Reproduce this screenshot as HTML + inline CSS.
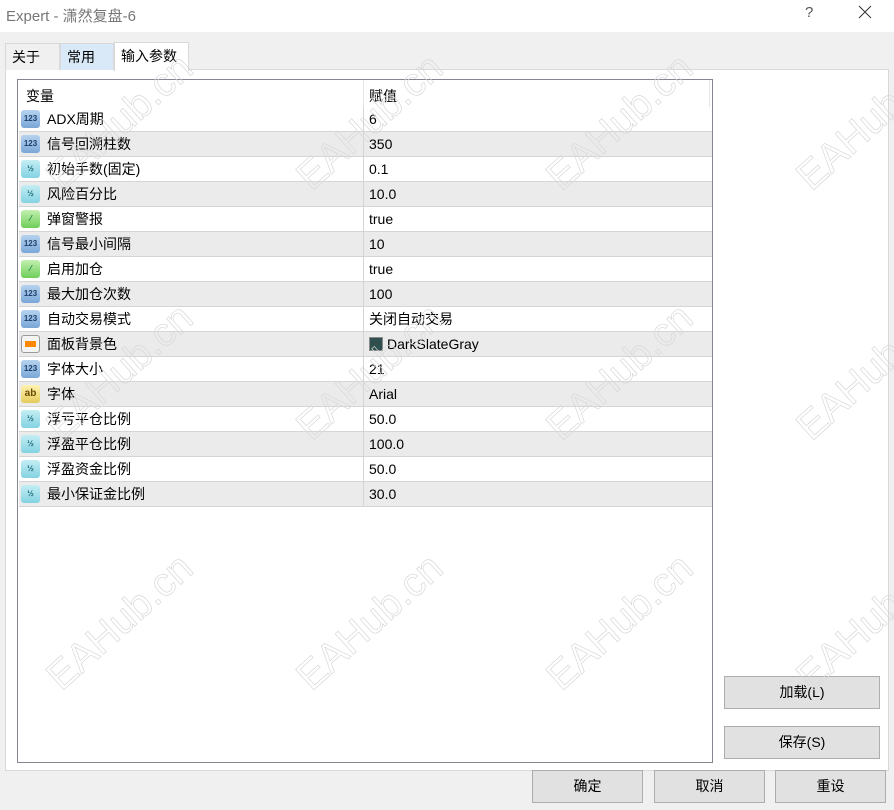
<!DOCTYPE html>
<html><head><meta charset="utf-8"><style>
*{margin:0;padding:0;box-sizing:border-box}
body{width:894px;height:810px;background:#f0f0f0;font-family:"Liberation Sans","Noto Sans CJK SC",sans-serif;font-size:14px;color:#000;position:relative;overflow:hidden}
.title{position:absolute;left:0;top:0;width:894px;height:32px;background:#fff}
.title span{position:absolute;left:6px;top:5px;font-size:15px;color:#777}
.q{position:absolute;left:805px;top:4px;font-size:15px;color:#555}
.x{position:absolute;left:858px;top:5px}
.tab{position:absolute;top:43px;height:27px;border:1px solid #d9d9d9;border-bottom:none;padding:0 6px;line-height:26px;font-size:14px}
.panel{position:absolute;left:5px;top:69px;width:884px;height:702px;background:#fff;border:1px solid #d9d9d9}
.grid{position:absolute;left:17px;top:79px;width:696px;height:684px;border:1px solid #828790;background:#fff}
.row{position:absolute;left:1px;width:693px;height:25px;border-bottom:1px solid #d5d5d5;line-height:24px}
.row.g{background:#ebebeb}
.row .n{position:absolute;left:28px;top:0}
.row .v{position:absolute;left:350px;top:0}
.row .d{position:absolute;left:344px;top:0;width:1px;height:25px;background:#d5d5d5}
.ic{position:absolute;left:2px;top:3px;width:19px;height:18px;border-radius:3px;font-size:8px;font-weight:bold;text-align:center;line-height:18px;color:#1d3f6a}
.i1{background:linear-gradient(#b6d2ee,#7aa7d8)}
.i2{background:linear-gradient(#c4eef4,#84d2e2);color:#1a6a7a}
.i3{background:linear-gradient(#c2f0b0,#6fce5a);color:#174}
.i4{background:linear-gradient(#fff3b0,#e3cb5c);color:#6a4a00;font-size:10px}
.i5{background:#f4f4f4;border:1px solid #999}
.btn{position:absolute;height:33px;background:#e1e1e1;border:1px solid #adadad;text-align:center;line-height:31px;font-size:14px}
.wm{position:absolute;font-size:40px;color:transparent;-webkit-text-stroke:0.7px #d8d8d8;transform:rotate(-42deg);white-space:nowrap;font-family:"Liberation Sans",sans-serif}
</style></head><body>
<div class="title"><span>Expert - 潇然复盘-6</span><div class="q">?</div><svg class="x" width="14" height="14" viewBox="0 0 14 14"><path d="M1 1L13 13M13 1L1 13" stroke="#333" stroke-width="1"/></svg></div>
<div class="panel"></div>
<div class="tab" style="left:5px;width:55px;background:#f0f0f0">关于</div>
<div class="tab" style="left:60px;width:54px;background:#d9e9f7">常用</div>
<div class="tab" style="left:114px;width:75px;top:42px;height:29px;line-height:26px;background:#fff">输入参数</div>
<div class="grid">
<div style="position:absolute;left:8px;top:4px;line-height:24px">变量</div>
<div style="position:absolute;left:351px;top:4px;line-height:24px">赋值</div>
<div style="position:absolute;left:345px;top:0;width:1px;height:27px;background:#e5e5e5"></div>
<div style="position:absolute;left:691px;top:0;width:1px;height:27px;background:#e5e5e5"></div>
<div class="row" style="top:27px"><div class="ic i1">123</div><span class="n">ADX周期</span><div class="d"></div><span class="v">6</span></div>
<div class="row g" style="top:52px"><div class="ic i1">123</div><span class="n">信号回溯柱数</span><div class="d"></div><span class="v">350</span></div>
<div class="row" style="top:77px"><div class="ic i2">½</div><span class="n">初始手数(固定)</span><div class="d"></div><span class="v">0.1</span></div>
<div class="row g" style="top:102px"><div class="ic i2">½</div><span class="n">风险百分比</span><div class="d"></div><span class="v">10.0</span></div>
<div class="row" style="top:127px"><div class="ic i3">⁄</div><span class="n">弹窗警报</span><div class="d"></div><span class="v">true</span></div>
<div class="row g" style="top:152px"><div class="ic i1">123</div><span class="n">信号最小间隔</span><div class="d"></div><span class="v">10</span></div>
<div class="row" style="top:177px"><div class="ic i3">⁄</div><span class="n">启用加仓</span><div class="d"></div><span class="v">true</span></div>
<div class="row g" style="top:202px"><div class="ic i1">123</div><span class="n">最大加仓次数</span><div class="d"></div><span class="v">100</span></div>
<div class="row" style="top:227px"><div class="ic i1">123</div><span class="n">自动交易模式</span><div class="d"></div><span class="v">关闭自动交易</span></div>
<div class="row g" style="top:252px"><div class="ic i5"><div style="margin:5px 3px;height:6px;background:#f80"></div></div><span class="n">面板背景色</span><div class="d"></div><span class="v" style="left:350px"><span style="display:inline-block;width:14px;height:14px;background:#2f4f4f;border:1px solid #888;vertical-align:-2px;margin-right:4px"></span>DarkSlateGray</span></div>
<div class="row" style="top:277px"><div class="ic i1">123</div><span class="n">字体大小</span><div class="d"></div><span class="v">21</span></div>
<div class="row g" style="top:302px"><div class="ic i4">ab</div><span class="n">字体</span><div class="d"></div><span class="v">Arial</span></div>
<div class="row" style="top:327px"><div class="ic i2">½</div><span class="n">浮亏平仓比例</span><div class="d"></div><span class="v">50.0</span></div>
<div class="row g" style="top:352px"><div class="ic i2">½</div><span class="n">浮盈平仓比例</span><div class="d"></div><span class="v">100.0</span></div>
<div class="row" style="top:377px"><div class="ic i2">½</div><span class="n">浮盈资金比例</span><div class="d"></div><span class="v">50.0</span></div>
<div class="row g" style="top:402px"><div class="ic i2">½</div><span class="n">最小保证金比例</span><div class="d"></div><span class="v">30.0</span></div>
</div>
<div class="btn" style="left:724px;top:676px;width:156px">加载(L)</div>
<div class="btn" style="left:724px;top:726px;width:156px">保存(S)</div>
<div class="btn" style="left:532px;top:770px;width:111px">确定</div>
<div class="btn" style="left:654px;top:770px;width:111px">取消</div>
<div class="btn" style="left:775px;top:770px;width:111px">重设</div>
<div class="wm" style="left:30px;top:100px">EAHub.cn</div>
<div class="wm" style="left:280px;top:100px">EAHub.cn</div>
<div class="wm" style="left:530px;top:100px">EAHub.cn</div>
<div class="wm" style="left:780px;top:100px">EAHub.cn</div>
<div class="wm" style="left:30px;top:350px">EAHub.cn</div>
<div class="wm" style="left:280px;top:350px">EAHub.cn</div>
<div class="wm" style="left:530px;top:350px">EAHub.cn</div>
<div class="wm" style="left:780px;top:350px">EAHub.cn</div>
<div class="wm" style="left:30px;top:600px">EAHub.cn</div>
<div class="wm" style="left:280px;top:600px">EAHub.cn</div>
<div class="wm" style="left:530px;top:600px">EAHub.cn</div>
<div class="wm" style="left:780px;top:600px">EAHub.cn</div>
</body></html>
